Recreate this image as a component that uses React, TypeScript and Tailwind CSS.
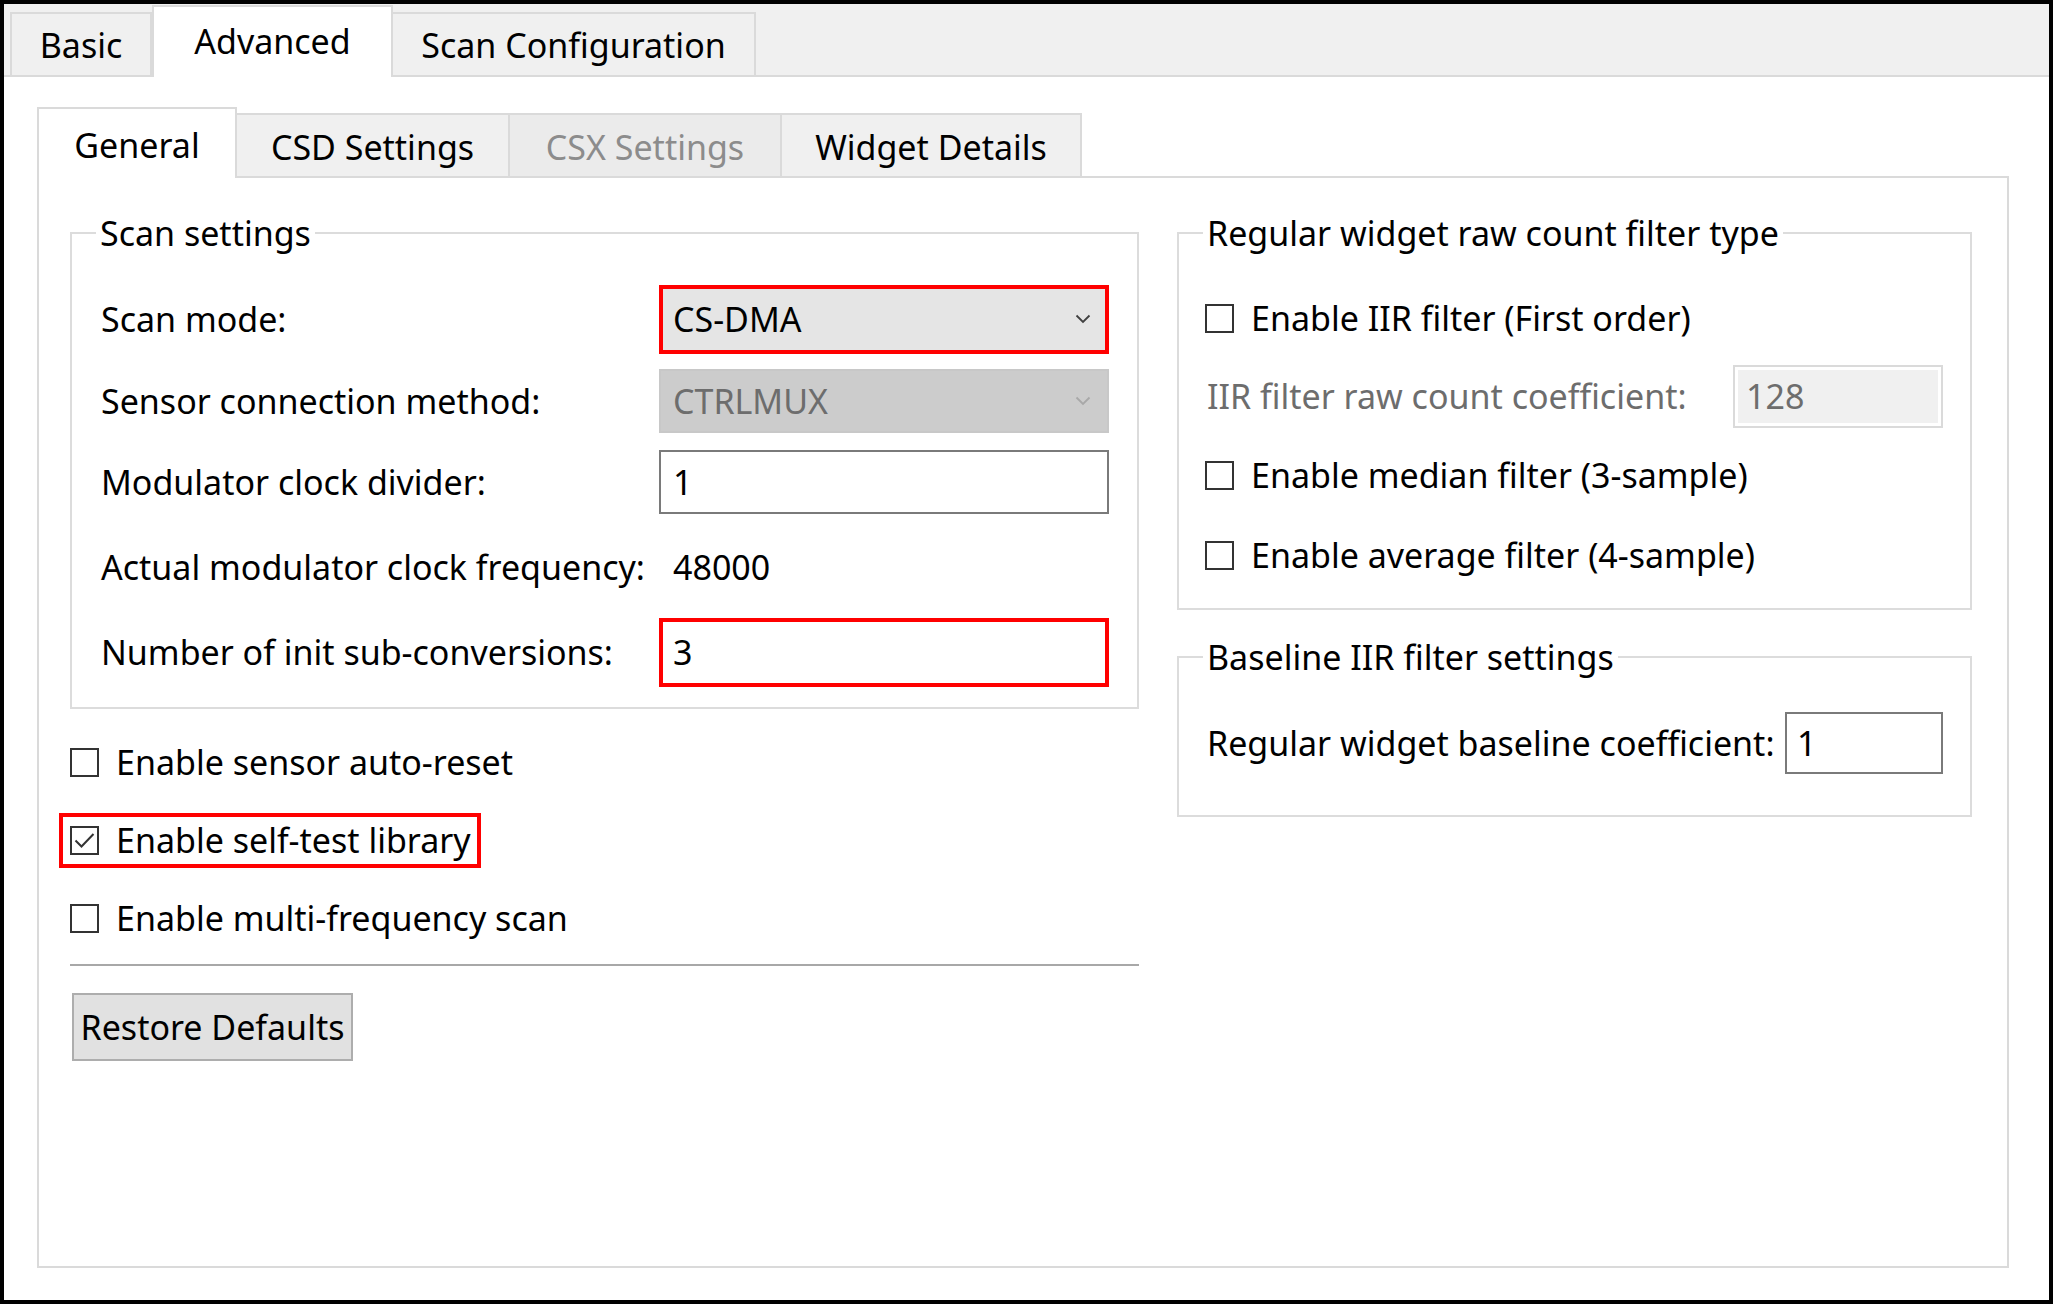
import React from 'react';

function Checkbox({ checked }: { checked?: boolean }) {
  return (
    <span className="flex h-[29px] w-[29px] shrink-0 items-center justify-center border-2 border-[#333333] bg-white">
      {checked && (
        <svg width="21" height="17" viewBox="0 0 21 17" fill="none" stroke="#333333" strokeWidth={2}>
          <path d="M1.5 8.5 L7.5 14.5 L19.5 2" />
        </svg>
      )}
    </span>
  );
}

function Chevron({ disabled }: { disabled?: boolean }) {
  return (
    <svg width="16" height="10" viewBox="0 0 16 10" fill="none" stroke={disabled ? '#a8a8a8' : '#404040'} strokeWidth={1.8}>
      <path d="M1.5 1.5 L8 8 L14.5 1.5" />
    </svg>
  );
}

function CheckRow({ label, checked }: { label: string; checked?: boolean }) {
  return (
    <div className="flex h-[78px] items-center gap-[17px]">
      <Checkbox checked={checked} />
      <span>{label}</span>
    </div>
  );
}

function FormRow({ label, height, children }: { label: string; height: string; children: React.ReactNode }) {
  return (
    <div className={`flex items-center ${height}`}>
      <span className="flex-1 whitespace-nowrap">{label}</span>
      <div className="w-[450px]">{children}</div>
    </div>
  );
}

export default function App() {
  return (
    <div className="flex h-[1304px] w-[2053px] flex-col border-4 border-black bg-white font-['Noto_Sans','Open_Sans',sans-serif] text-[34px] text-black">
      {/* Outer tabs */}
      <div className="flex h-[73px] shrink-0 items-end border-b-2 border-[#dadada] bg-[#f0f0f0] pl-[6px]">
        <div className="flex h-[63px] w-[142px] items-center justify-center border-2 border-b-0 border-[#dadada] pt-[2px]">
          Basic
        </div>
        <div className="relative z-10 -mb-[2px] flex h-[72px] w-[241px] items-center justify-center border-2 border-b-0 border-[#dadada] bg-white pb-[2px]">
          Advanced
        </div>
        <div className="flex h-[63px] w-[363px] items-center justify-center border-2 border-b-0 border-l-0 border-[#dadada] pt-[2px]">
          Scan Configuration
        </div>
      </div>

      <div className="flex flex-col pl-[33px] pr-[40px] pt-[30px]">
        {/* Inner tabs */}
        <div className="flex h-[69px] items-end">
          <div className="relative z-10 -mb-[2px] flex h-[71px] w-[200px] items-center justify-center border-2 border-b-0 border-[#dadada] bg-white pt-[4px]">
            General
          </div>
          <div className="flex h-[63px] w-[273px] items-center justify-center border-2 border-b-0 border-l-0 border-[#dadada] bg-[#f0f0f0] pt-[4px]">
            CSD Settings
          </div>
          <div className="flex h-[63px] w-[272px] items-center justify-center border-2 border-b-0 border-l-0 border-[#dadada] bg-[#ebebeb] pt-[4px] text-[#8c8c8c]">
            CSX Settings
          </div>
          <div className="flex h-[63px] w-[300px] items-center justify-center border-2 border-b-0 border-l-0 border-[#dadada] bg-[#f0f0f0] pt-[4px]">
            Widget Details
          </div>
        </div>

        {/* Panel */}
        <div className="flex h-[1092px] gap-[38px] border-2 border-[#dadada] pl-[31px] pt-[31px]">
          {/* Left column */}
          <div className="flex w-[1069px] flex-col">
            <fieldset className="border-2 border-[#dcdcdc] pb-[15px] pt-[21px]">
              <legend className="ml-[24px] px-[4px] leading-[48px]">Scan settings</legend>
              <div className="pl-[29px] pr-[28px]">
                <FormRow label="Scan mode:" height="h-[82px]">
                  <div className="flex h-[69px] items-center justify-between border-4 border-[#ff0000] bg-[#e5e5e5] pl-[10px] pr-[14px]">
                    <span>CS-DMA</span>
                    <Chevron />
                  </div>
                </FormRow>
                <FormRow label="Sensor connection method:" height="h-[82px]">
                  <div className="flex h-[64px] items-center justify-between border-2 border-[#c8c8c8] bg-[#cccccc] pl-[12px] pr-[16px] text-[#6d6d6d]">
                    <span>CTRLMUX</span>
                    <Chevron disabled />
                  </div>
                </FormRow>
                <FormRow label="Modulator clock divider:" height="h-[80px]">
                  <div className="flex h-[64px] items-center border-2 border-[#7a7a7a] bg-white pl-[12px]">1</div>
                </FormRow>
                <FormRow label="Actual modulator clock frequency:" height="h-[90px]">
                  <div className="pl-[14px]">48000</div>
                </FormRow>
                <FormRow label="Number of init sub-conversions:" height="h-[80px]">
                  <div className="flex h-[69px] items-center border-4 border-[#ff0000] bg-white pl-[10px]">3</div>
                </FormRow>
              </div>
            </fieldset>

            <div className="mt-[14px] flex flex-col">
              <CheckRow label="Enable sensor auto-reset" />
              <div className="flex h-[78px] items-center">
                <div className="-ml-[11px] flex h-[55px] w-fit items-center gap-[17px] border-4 border-[#ff0000] pl-[7px] pr-[6px]">
                  <Checkbox checked />
                  <span>Enable self-test library</span>
                </div>
              </div>
              <CheckRow label="Enable multi-frequency scan" />
            </div>

            <div className="mt-[7px] h-[2px] w-full bg-[#a8a8a8]" />

            <button className="ml-[2px] mt-[27px] flex h-[68px] w-[281px] items-center justify-center border-2 border-[#adadad] bg-[#e1e1e1]">
              Restore Defaults
            </button>
          </div>

          {/* Right column */}
          <div className="flex w-[795px] flex-col">
            <fieldset className="border-2 border-[#dcdcdc] pb-[14px] pt-[21px]">
              <legend className="ml-[24px] px-[4px] leading-[48px]">Regular widget raw count filter type</legend>
              <div className="pl-[26px] pr-[27px]">
                <div className="flex h-[80px] items-center gap-[17px]">
                  <Checkbox />
                  <span>Enable IIR filter (First order)</span>
                </div>
                <div className="flex h-[76px] items-center justify-between">
                  <span className="pl-[2px] text-[#6d6d6d]">IIR filter raw count coefficient:</span>
                  <div className="h-[63px] w-[210px] border-2 border-[#dadada] bg-white p-[3px]">
                    <div className="flex h-full items-center bg-[#f0f0f0] pl-[8px] text-[#6d6d6d]">128</div>
                  </div>
                </div>
                <div className="flex h-[82px] items-center gap-[17px]">
                  <Checkbox />
                  <span>Enable median filter (3-sample)</span>
                </div>
                <div className="flex h-[78px] items-center gap-[17px]">
                  <Checkbox />
                  <span>Enable average filter (4-sample)</span>
                </div>
              </div>
            </fieldset>

            <fieldset className="mt-[23px] border-2 border-[#dcdcdc] pb-[34px] pt-[24px]">
              <legend className="ml-[24px] px-[4px] leading-[48px]">Baseline IIR filter settings</legend>
              <div className="flex h-[76px] items-center justify-between pl-[28px] pr-[27px]">
                <span>Regular widget baseline coefficient:</span>
                <div className="flex h-[62px] w-[158px] items-center border-2 border-[#7a7a7a] bg-white pl-[10px]">1</div>
              </div>
            </fieldset>
          </div>
        </div>
      </div>
    </div>
  );
}
